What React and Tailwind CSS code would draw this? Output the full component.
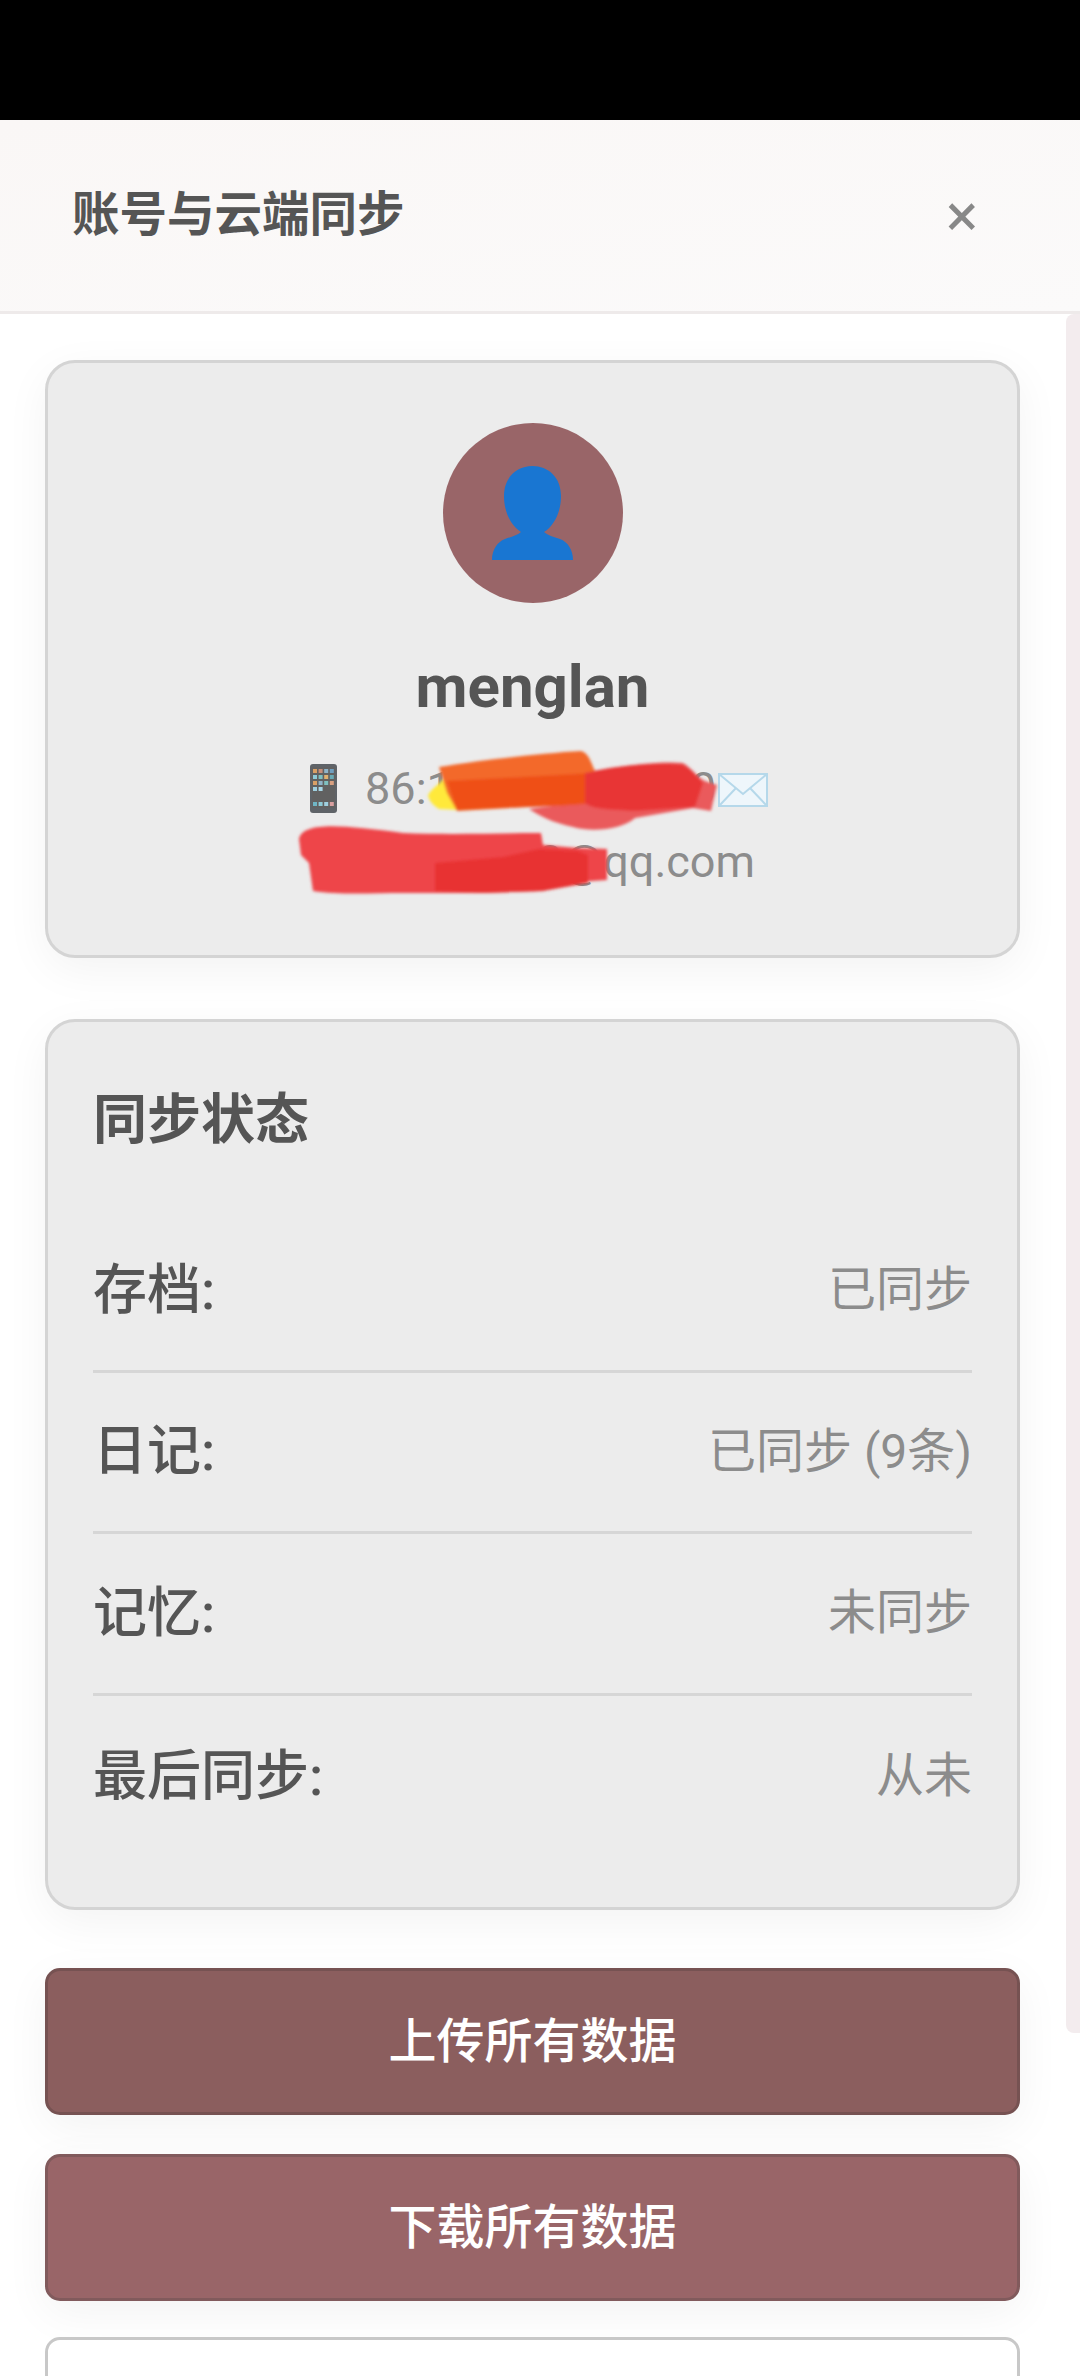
function PhoneIcon() {
  const tiles = ['#d9a066', '#c98f7a', '#8fb4c9', '#6f9fc0', '#8ecbd8', '#7fc0c0', '#e0b070', '#69aab5', '#d9a066', '#8fb4c9', '#7fc0c0', '#d9a080', '#9fd0e0', '#a8d8e8'];
  return (
    <svg width="27" height="49" viewBox="0 0 27 49" className="inline-block align-[-9px] ml-[13px] mr-[28px]">
      <rect width="27" height="49" rx="3" fill="#5f6368" />
      <rect x="2" y="3" width="23" height="41" fill="#616161" />
      {tiles.map((c, i) => (
        <rect key={i} x={3 + (i % 4) * 5.6} y={5 + Math.floor(i / 4) * 6} width="4" height="4" fill={c} />
      ))}
      {['#6fb5c5', '#8ecbd8', '#9fd0e0', '#d9a0a0'].map((c, i) => (
        <rect key={c} x={3 + i * 5.6} y="38" width="4" height="4" fill={c} />
      ))}
    </svg>
  );
}

function MailIcon() {
  return (
    <svg width="50" height="34" viewBox="0 0 50 34" className="inline-block align-[-3px] ml-[2px]">
      <rect x="1" y="1" width="48" height="32" fill="#eef6fb" stroke="#b5d8ea" strokeWidth="2" />
      <path d="M1 1L25 21L49 1M1 33L18 15M49 33L32 15" fill="none" stroke="#b5d8ea" strokeWidth="2" />
    </svg>
  );
}

function Scribbles() {
  // hand drawn redaction over the phone number and the email
  return (
    <svg width="975" height="598" viewBox="45 360 975 598" className="absolute left-0 top-0">
      <defs>
        <filter id="soft"><feGaussianBlur stdDeviation="1.4" /></filter>
      </defs>
      <g filter="url(#soft)">
        <path d="M425 792C430 784 436 782 440 776L446 772L458 807L436 806C430 802 426 798 425 792Z" fill="#ffe93b" />
        <path d="M436 764C480 757 540 750 578 748C586 750 588 760 592 768L592 800L454 808L444 790Z" fill="#f3692b" />
        <path d="M526 806L590 798L590 768C620 762 660 758 680 760C690 766 695 775 702 778L714 782L708 808L690 805L632 815C620 826 590 830 570 824C550 820 535 812 526 806Z" fill="#ea5a5c" />
        <path d="M444 778L590 770L590 800C560 804 500 804 454 807Z" fill="#ef5012" />
        <path d="M582 770C620 762 660 758 680 762C690 768 695 775 700 780L692 804L632 808C600 806 590 806 582 800Z" fill="#e83636" />
        <path d="M296 836C300 818 340 822 400 830C450 832 500 830 538 830L540 842L575 845L604 846L604 877L560 880L540 888L480 890L400 890C370 890 335 892 310 888L306 860L298 852Z" fill="#ee4548" />
        <path d="M432 860L500 854L536 846L575 848L585 852L585 880L540 888L480 890L432 888Z" fill="#e83232" />
      </g>
    </svg>
  );
}

function StatusRow({ label, value, last }) {
  return (
    <div className={`flex justify-between items-center h-[161.5px] ${last ? '' : 'border-b-[3px] border-[#d6d6d6]'}`}>
      <span className="text-[54px] font-medium text-[#555555]">{label}</span>
      <span className="text-[48px] text-[#8c8c8c]">{value}</span>
    </div>
  );
}

export default function App() {
  return (
    <div className="relative h-[2376px] overflow-hidden bg-white font-['Roboto','Noto_Sans_CJK_SC',sans-serif]">
      <div className="h-[120px] bg-black" />
      <header className="flex items-center justify-between h-[194px] pl-[72px] pr-[102px] bg-gradient-to-br from-[#faf7f6] to-[#fbfafa] border-b-[3px] border-[#eeeaea]">
        <h1 className="text-[47.5px] font-semibold text-[#555555]">账号与云端同步</h1>
        <span className="text-[60px] leading-none text-[#888888]">×</span>
      </header>

      <main className="px-[45px] pt-[46px] pr-[60px]">
        <section className="relative h-[598px] pt-[60px] bg-[#ececec] border-[3px] border-[#d4d4d4] rounded-[30px] shadow-[0_12px_45px_rgba(0,0,0,0.05)] text-center">
          <div className="flex items-center justify-center w-[180px] h-[180px] mx-auto rounded-full bg-[#996568]">
            <svg width="81" height="94" viewBox="0 0 81 94">
              <path d="M40.5 0C56 0 69 11 69 30C69 46 62 60 52 66C55 69 62 71 68 73C76 76 81 84 81 94L0 94C0 84 5 76 13 73C19 71 26 69 29 66C19 60 12 46 12 30C12 11 25 0 40.5 0Z" fill="#1976d2" />
            </svg>
          </div>
          <h2 className="mt-[48px] text-[60px] leading-[72px] font-bold text-[#555555]">menglan</h2>
          <div className="mt-[29px] text-[45px] leading-[73px] text-[#8c8c8c]">
            <p><PhoneIcon />86:1 0000000000<MailIcon /></p>
            <p>0000000000@qq.com</p>
          </div>
          <Scribbles />
        </section>

        <section className="mt-[61px] h-[891px] pt-[63px] px-[45px] bg-[#ececec] border-[3px] border-[#d4d4d4] rounded-[30px] shadow-[0_12px_45px_rgba(0,0,0,0.05)]">
          <h3 className="text-[54px] leading-[72px] font-semibold text-[#555555]">同步状态</h3>
          <div className="mt-[54px]">
            <StatusRow label="存档:" value="已同步" />
            <StatusRow label="日记:" value="已同步 (9条)" />
            <StatusRow label="记忆:" value="未同步" />
            <StatusRow label="最后同步:" value="从未" last />
          </div>
        </section>

        <button className="block w-full h-[147px] mt-[58px] rounded-[15px] bg-[#8b5e5e] border-[3px] border-[#765252] text-[48px] font-medium text-white shadow-[0_12px_45px_rgba(0,0,0,0.05)]">上传所有数据</button>
        <button className="block w-full h-[147px] mt-[39px] rounded-[15px] bg-[#996568] border-[3px] border-[#815a5c] text-[48px] font-medium text-white shadow-[0_12px_45px_rgba(0,0,0,0.05)]">下载所有数据</button>
        <div className="h-[147px] mt-[36px] rounded-[15px] bg-white border-[3px] border-[#c8c8c8]" />
      </main>

      <div className="absolute right-0 top-[314px] w-[14px] h-[1719px] rounded-l-[8px] bg-[#f3ecee]" />
    </div>
  );
}
